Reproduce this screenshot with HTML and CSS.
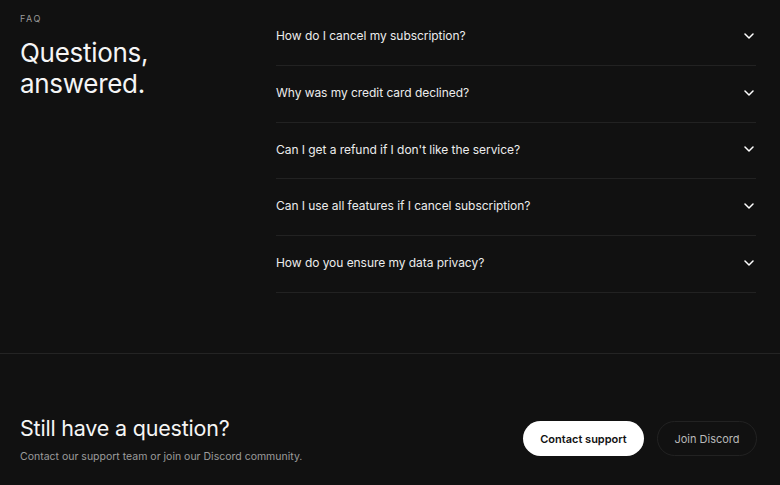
FILE: index.html
```html
<!DOCTYPE html>
<html lang="en">
<head>
<meta charset="utf-8">
<title>FAQ</title>
<link rel="stylesheet" href="styles.css">
</head>
<body>
<section class="faq">
  <div class="faq-intro">
    <div class="eyebrow">FAQ</div>
    <h1 class="title">Questions,<br>answered.</h1>
  </div>
  <ul class="faq-list">
    <li class="faq-item"><span>How do I cancel my subscription?</span><svg class="chev" viewBox="0 0 10 6" width="10" height="6"><path d="M1 1l4 4 4-4" fill="none" stroke="#fff" stroke-width="1.5" stroke-linecap="round" stroke-linejoin="round"/></svg></li>
    <li class="faq-item"><span>Why was my credit card declined?</span><svg class="chev" viewBox="0 0 10 6" width="10" height="6"><path d="M1 1l4 4 4-4" fill="none" stroke="#fff" stroke-width="1.5" stroke-linecap="round" stroke-linejoin="round"/></svg></li>
    <li class="faq-item"><span>Can I get a refund if I don't like the service?</span><svg class="chev" viewBox="0 0 10 6" width="10" height="6"><path d="M1 1l4 4 4-4" fill="none" stroke="#fff" stroke-width="1.5" stroke-linecap="round" stroke-linejoin="round"/></svg></li>
    <li class="faq-item"><span>Can I use all features if I cancel subscription?</span><svg class="chev" viewBox="0 0 10 6" width="10" height="6"><path d="M1 1l4 4 4-4" fill="none" stroke="#fff" stroke-width="1.5" stroke-linecap="round" stroke-linejoin="round"/></svg></li>
    <li class="faq-item"><span>How do you ensure my data privacy?</span><svg class="chev" viewBox="0 0 10 6" width="10" height="6"><path d="M1 1l4 4 4-4" fill="none" stroke="#fff" stroke-width="1.5" stroke-linecap="round" stroke-linejoin="round"/></svg></li>
  </ul>
</section>
<section class="cta">
  <div class="cta-text">
    <h2 class="cta-title">Still have a question?</h2>
    <p class="cta-sub">Contact our support team or join our Discord community.</p>
  </div>
  <div class="cta-actions">
    <a class="btn btn-primary" href="#">Contact support</a>
    <a class="btn btn-ghost" href="#">Join Discord</a>
  </div>
</section>
</body>
</html>
```
FILE: styles.css
```css
* { box-sizing: border-box; }
html, body { margin: 0; padding: 0; }
body {
  background: #111111;
  color: #f2f2f2;
  font-family: Inter, "Noto Sans", sans-serif;
  width: 780px;
  height: 485px;
  overflow: hidden;
}
.faq {
  display: grid;
  grid-template-columns: 256px 1fr;
  padding: 9px 24px 60px 20px;
  border-bottom: 1px solid #242424;
}
.faq-intro { padding-top: 4px; }
.eyebrow {
  font-size: 9px;
  letter-spacing: 1.6px;
  color: #9a9a9a;
  line-height: 11px;
}
.title {
  margin: 13px 0 0;
  font-size: 26px;
  font-weight: 400;
  line-height: 31px;
  letter-spacing: -0.3px;
  color: #f5f5f5;
}
.faq-list { list-style: none; margin: 0; padding: 0; }
.faq-item {
  display: flex;
  align-items: center;
  justify-content: space-between;
  padding: 19px 2px 21px 0;
  line-height: 15.75px;
  font-size: 12px;
  letter-spacing: -0.05px;
  color: #ececec;
  border-bottom: 1px solid #222222;
}
.chev { display: block; }
.cta {
  display: flex;
  align-items: center;
  justify-content: space-between;
  padding: 60px 23px 0 20px;
}
.cta-title {
  margin: 0;
  font-size: 21.5px;
  font-weight: 400;
  line-height: 28px;
  letter-spacing: -0.2px;
  color: #f5f5f5;
}
.cta-sub {
  margin: 8px 0 0;
  font-size: 10.5px;
  line-height: 14px;
  color: #9c9c9c;
}
.cta-actions { display: flex; gap: 13px; }
.btn {
  display: inline-flex;
  align-items: center;
  justify-content: center;
  height: 35px;
  border-radius: 18px;
  font-size: 11px;
  text-decoration: none;
}
.btn-primary {
  width: 121px;
  background: #ffffff;
  color: #111;
  font-weight: 600;
}
.btn-ghost {
  width: 100px;
  border: 1px solid #222;
  color: #b8b8b8;
}
```
